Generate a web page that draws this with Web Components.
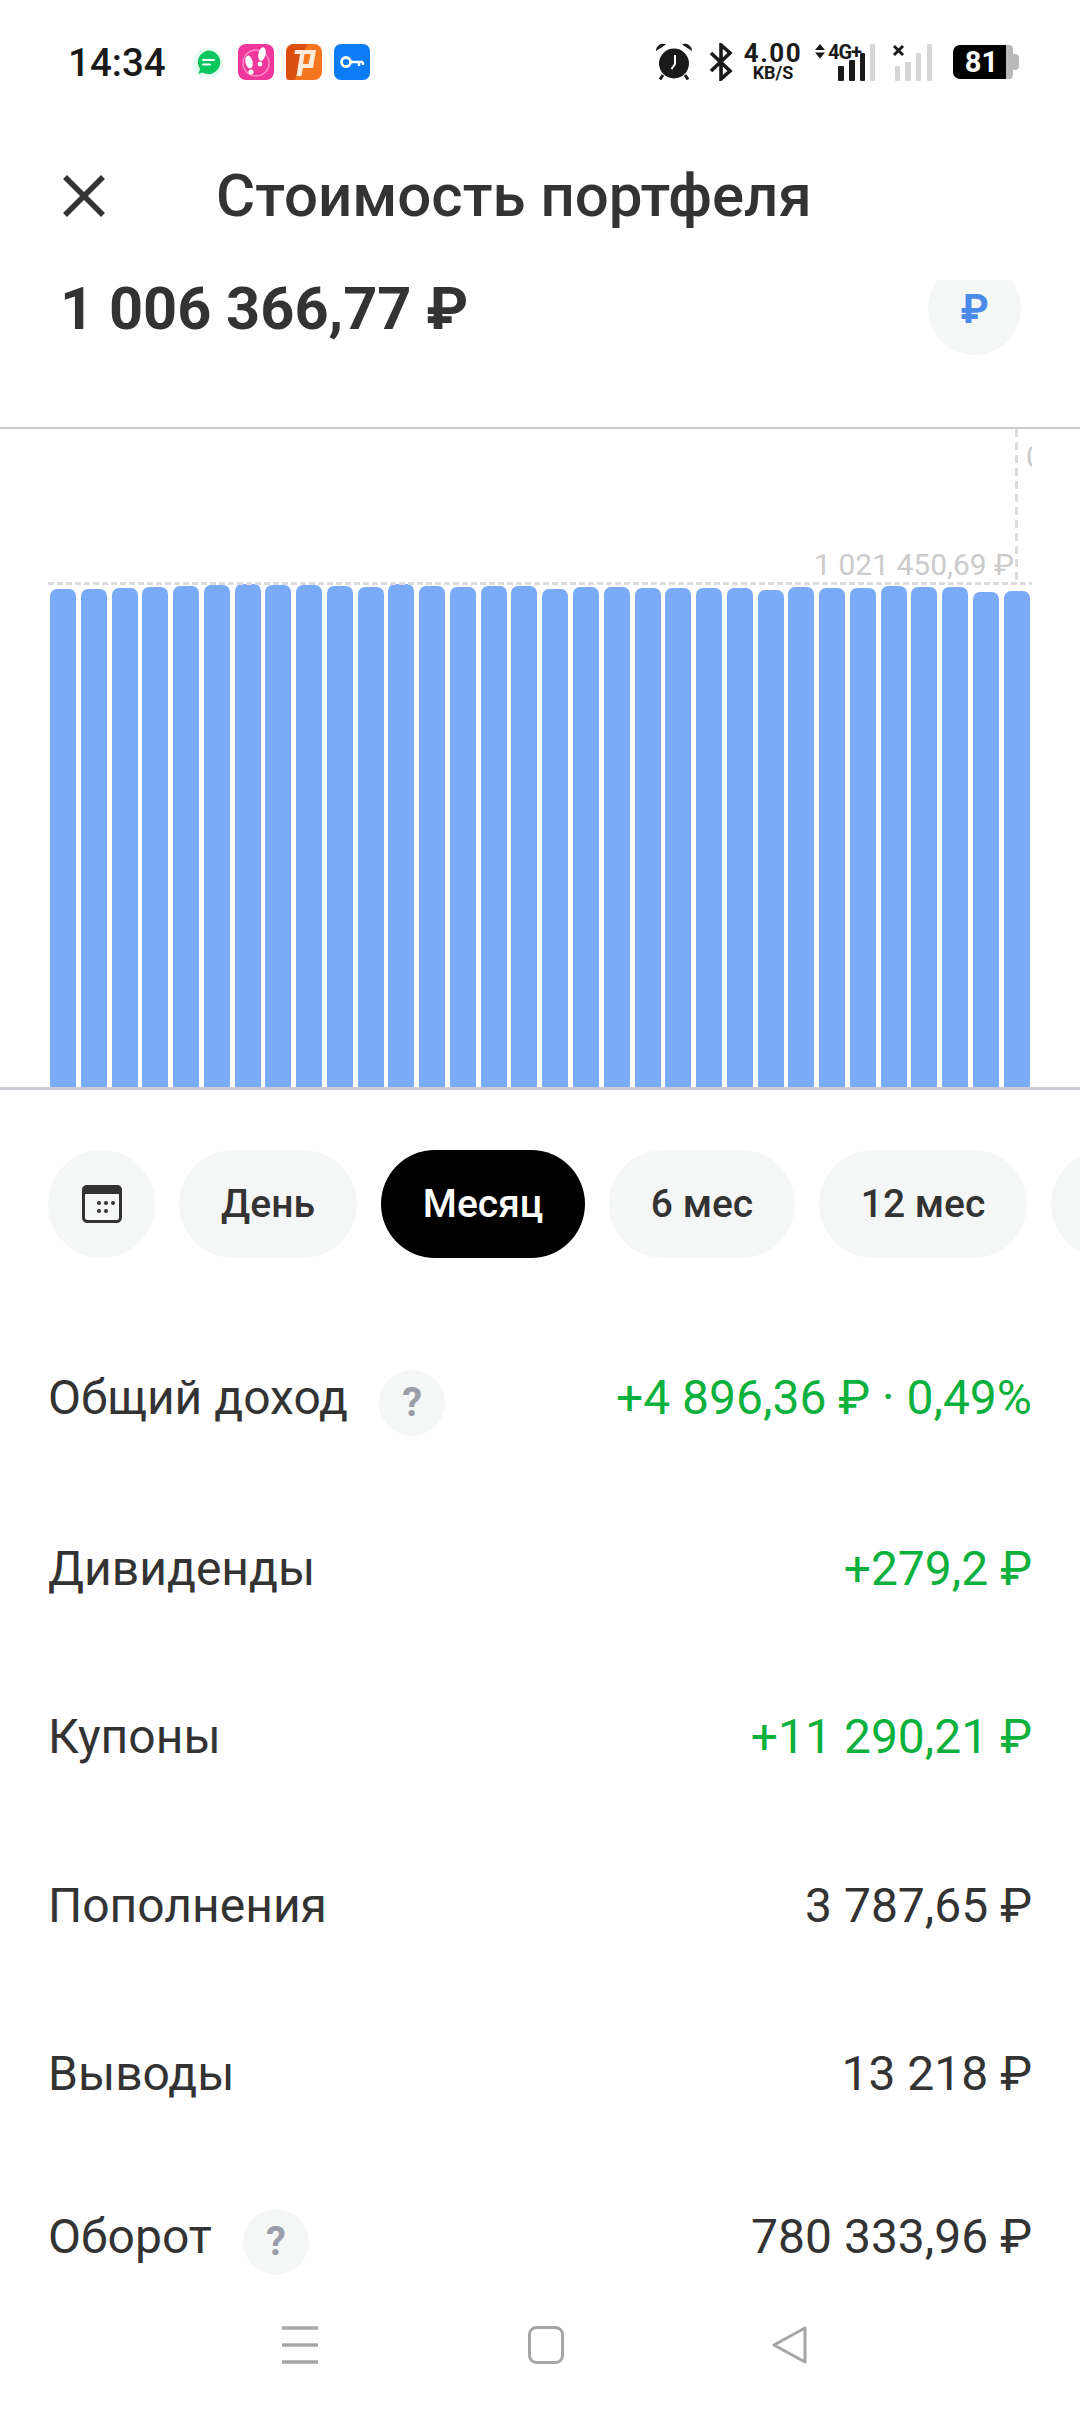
<!DOCTYPE html>
<html lang="ru">
<head>
<meta charset="utf-8">
<title>Стоимость портфеля</title>
<style>
  html, body { margin: 0; padding: 0; background: #fff; }
  body { width: 1080px; height: 2412px; overflow: hidden; font-family: Roboto, "Noto Sans", sans-serif; color: #333; }
</style>
</head>
<body>
<status-bar></status-bar>
<title-bar>Стоимость портфеля</title-bar>
<total-head amount="1 006 366,77 ₽"></total-head>
<bar-chart></bar-chart>
<period-chips></period-chips>
<stat-row label="Общий доход" value="+4 896,36 ₽ · 0,49%" help green style="height:166px;padding-bottom:8px"></stat-row>
<stat-row label="Дивиденды" value="+279,2 ₽" green style="height:170px"></stat-row>
<stat-row label="Купоны" value="+11 290,21 ₽" green style="height:166px"></stat-row>
<stat-row label="Пополнения" value="3 787,65 ₽" style="height:172px"></stat-row>
<stat-row label="Выводы" value="13 218 ₽" style="height:164px"></stat-row>
<stat-row label="Оборот" value="780 333,96 ₽" help style="height:162px"></stat-row>
<nav-bar></nav-bar>

<script>
class StatusBar extends HTMLElement {
    constructor() {
        super();
        this.attachShadow({mode: "open"}).innerHTML = `
            <style>
                :host { display: flex; align-items: center; height: 124px; padding: 0 61px 0 68px; box-sizing: border-box; color: #1a1a1a; }
                .time { font: 500 38.5px Roboto, sans-serif; width: 122px; }
                .apps { display: flex; gap: 12px; }
                .apps svg { width: 36px; height: 36px; display: block; }
                .right { margin-left: auto; display: flex; align-items: center; height: 38px; position: relative; }
                svg { display: block; flex: none; }
                .speed { display: flex; flex-direction: column; align-items: center; width: 60px; margin-left: 10px; }
                .speed b { font: 700 26px/20px Roboto, sans-serif; letter-spacing: 1.5px; }
                .speed i { font: 700 18px/16px Roboto, sans-serif; font-style: normal; margin-top: 2px; }
                .lte { position: relative; width: 60px; height: 38px; margin-left: 12px; }
                .lte span { position: absolute; left: 13px; top: 1px; font: 700 20px/16px Roboto, sans-serif; letter-spacing: -1px; }
                .batt { display: flex; align-items: center; margin-left: 20px; }
                .batt .fill { width: 53px; height: 34px; background: #000; color: #fff; border-radius: 7px 0 0 7px; font: 700 29px/35px Roboto, sans-serif; text-align: center; padding-left: 4px; box-sizing: border-box; }
                .batt .rest { width: 7px; height: 34px; background: #b9b9b9; border-radius: 0 4px 4px 0; }
                .batt .tip { width: 6px; height: 16px; background: #b9b9b9; border-radius: 0 4px 4px 0; }
            </style>
            <span class="time">14:34</span>
            <div class="apps">
                <svg viewBox="0 0 36 36"><circle cx="18" cy="19" r="15" fill="#0fd06a" opacity=".1"/><path d="M18.500 6.500a11.800 11.800 0 1 1-6 22l-4 1.500 1.500-5a11.800 11.800 0 0 1 8.500-18.500z" fill="#0ac75f"/><path d="M13 16h11M13 20.500h7" stroke="#fff" stroke-width="2" stroke-linecap="round"/></svg>
                <svg viewBox="0 0 36 36"><rect width="36" height="36" rx="8" fill="#f0379b"/><circle cx="18" cy="19" r="13" fill="none" stroke="#ff8cc6" stroke-width="1.500"/><ellipse cx="24" cy="10" rx="3.600" ry="7" fill="#fff" transform="rotate(12 24 10)"/><circle cx="22" cy="20" r="2.400" fill="#fff"/><ellipse cx="11" cy="18" rx="3.600" ry="6.500" fill="#fff" transform="rotate(-12 11 18)"/><circle cx="13" cy="28" r="2.600" fill="#fff"/></svg>
                <svg viewBox="0 0 36 36"><rect width="36" height="36" rx="8" fill="#f4761f"/><path d="M0 33V8a8 8 0 0 1 8-8h13L9 36H3a3 3 0 0 1-3-3z" fill="#dd4f10"/><path fill-rule="evenodd" d="M9 6h21l-3 18H17l-1.500 8h-5l3.500-22H8.500zM18.500 10l-1.500 10h5.500L24.500 10z" fill="#fdeadb"/></svg>
                <svg viewBox="0 0 36 36"><rect width="36" height="36" rx="7" fill="#0a7cf5"/><circle cx="12" cy="18" r="4.500" fill="none" stroke="#fff" stroke-width="2.800"/><path d="M16 18h13M25 18v4M29 18v3" stroke="#fff" stroke-width="2.400" fill="none"/></svg>
            </div>
            <div class="right">
                <svg width="38" height="38" viewBox="0 0 38 38"><circle cx="19" cy="20.500" r="15" fill="#1a1a1a"/><path d="M1 8A7 7 0 0 1 11 1.500zM37 8A7 7 0 0 0 27 1.500z" fill="#1a1a1a"/><path d="M8 32l-3 4.500M30 32l3 4.500" stroke="#1a1a1a" stroke-width="3"/><path d="M20 12v9l-3.500 5" stroke="#fff" stroke-width="2" fill="none"/></svg>
                <svg width="24" height="38" viewBox="0 0 24 38" style="margin-left:16px"><path d="M2 10l19 18-9 8V2l9 8L2 28" fill="none" stroke="#1a1a1a" stroke-width="3.600"/></svg>
                <div class="speed"><b>4.00</b><i>KB/S</i></div>
                <div class="lte">
                    <svg width="60" height="38" viewBox="0 0 60 38" style="position:absolute;left:0;top:0"><path d="M0 7l5-6 5 6zM0 9.500l5 6 5-6z" fill="#1a1a1a"/><rect x="23" y="23" width="6" height="15" rx="1" fill="#1a1a1a"/><rect x="34" y="17" width="6" height="21" rx="1" fill="#1a1a1a"/><rect x="45" y="10" width="5" height="28" rx="1" fill="#1a1a1a"/><rect x="55" y="1" width="5" height="37" rx="1" fill="#d6d6d6"/></svg>
                    <span>4G+</span>
                </div>
                <svg width="41" height="38" viewBox="0 0 41 38" style="margin-left:17px"><path d="M2 3l9 9M11 3l-9 9" stroke="#1a1a1a" stroke-width="3"/><rect x="3" y="23" width="5" height="15" rx="1" fill="#d6d6d6"/><rect x="13" y="19" width="6" height="19" rx="1" fill="#d6d6d6"/><rect x="24" y="10" width="5" height="28" rx="1" fill="#d6d6d6"/><rect x="35" y="1" width="5" height="37" rx="1" fill="#d6d6d6"/></svg>
                <div class="batt"><div class="fill">81</div><div class="rest"></div><div class="tip"></div></div>
            </div>`;
    }
}
customElements.define("status-bar", StatusBar);

class TitleBar extends HTMLElement {
    constructor() {
        super();
        this.attachShadow({mode: "open"}).innerHTML = `
            <style>
                :host { display: flex; align-items: center; height: 156px; padding: 0 0 12px 62px; box-sizing: border-box; position: relative; z-index: 1; background: #fff; }
                svg { width: 44px; height: 44px; flex: none; }
                h1 { margin: 0 0 2px 110px; font: 500 60px Roboto, sans-serif; color: #333; }
            </style>
            <svg viewBox="0 0 44 44"><path d="M3 3l38 38M41 3L3 41" stroke="#333" stroke-width="5.500"/></svg>
            <h1><slot></slot></h1>`;
    }
}
customElements.define("title-bar", TitleBar);

class TotalHead extends HTMLElement {
    constructor() {
        super();
        this.attachShadow({mode: "open"}).innerHTML = `
            <style>
                :host { display: flex; height: 147px; padding: 0 59px 0 60px; box-sizing: border-box; justify-content: space-between; }
                .sum { font: 700 59.5px/60px Roboto, sans-serif; color: #333; margin-top: -1px; }
                .cur { width: 93px; height: 93px; margin-top: -18px; border-radius: 50%; background: #f5f7f7; color: #4a8ae8; font: 700 40px/95px Roboto, sans-serif; text-align: center; }
            </style>
            <span class="sum">${this.getAttribute("amount")}</span>
            <span class="cur">₽</span>`;
    }
}
customElements.define("total-head", TotalHead);

class BarChart extends HTMLElement {
    constructor() {
        super();
        const tops = [589,589,588,587,586,585,584,585,585,586,587,584,586,587,586,586,589,587,587,588,588,588,588,590,587,588,588,586,587,587,592,591];
        const bars = tops.map(t => `<i style="height:${1087 - t}px"></i>`).join("");
        this.attachShadow({mode: "open"}).innerHTML = `
            <style>
                :host { display: block; height: 663px; position: relative; border-top: 2px solid #ccc; border-bottom: 3px solid #c9ccd2; box-sizing: border-box; overflow: hidden; }
                .bars { display: flex; gap: 4.77px; align-items: flex-end; height: 100%; padding-left: 50px; box-sizing: border-box; }
                i { display: block; width: 26px; background: #7aabf8; border-radius: 7px 7px 0 0; }
                .hline { position: absolute; left: 48px; top: 153px; width: 984px; height: 3px; background: repeating-linear-gradient(90deg, #dcdcdc 0 6px, transparent 6px 9px); }
                .vline { position: absolute; left: 1015px; top: 0; width: 3px; height: 156px; background: repeating-linear-gradient(180deg, #dcdcdc 0 8px, transparent 8px 13px); }
                .max { position: absolute; right: 66px; top: 118px; font: 400 30px/36px Roboto, sans-serif; color: #cbcbcb; }
                .next { position: absolute; left: 1026px; top: 10px; width: 6px; overflow: hidden; font: 400 30px/36px Roboto, sans-serif; color: #cbcbcb; }
            </style>
            <div class="bars">${bars}</div>
            <div class="hline"></div>
            <div class="vline"></div>
            <span class="max">1 021 450,69 ₽</span>
            <span class="next">0</span>`;
    }
}
customElements.define("bar-chart", BarChart);

class PeriodChips extends HTMLElement {
    constructor() {
        super();
        this.attachShadow({mode: "open"}).innerHTML = `
            <style>
                :host { display: flex; gap: 24px; height: 228px; padding: 60px 0 0 48px; box-sizing: border-box; overflow: hidden; }
                span { flex: none; height: 108px; border-radius: 54px; background: #f5f7f7; font: 500 39px/108px Roboto, sans-serif; color: #333; text-align: center; display: block; }
                .on { background: #000; color: #fff; }
                .cal { display: flex; align-items: center; justify-content: center; }
            </style>
            <span class="cal" style="width:107px">
                <svg width="40" height="38" viewBox="0 0 40 38"><path d="M0 9V5a5 5 0 0 1 5-5h30a5 5 0 0 1 5 5v4z" fill="#333"/><rect x="1.500" y="1.500" width="37" height="35" rx="4" fill="none" stroke="#333" stroke-width="3"/><g fill="#333"><circle cx="17" cy="18" r="2"/><circle cx="24" cy="18" r="2"/><circle cx="31" cy="18" r="2"/><circle cx="17" cy="26" r="2"/><circle cx="24" cy="26" r="2"/></g></svg>
            </span>
            <span style="width:178px">День</span>
            <span class="on" style="width:204px">Месяц</span>
            <span style="width:186px">6 мес</span>
            <span style="width:208px">12 мес</span>
            <span style="width:108px"></span>`;
    }
}
customElements.define("period-chips", PeriodChips);

class StatRow extends HTMLElement {
    constructor() {
        super();
        const help = this.hasAttribute("help") ? `<b>?</b>` : "";
        this.attachShadow({mode: "open"}).innerHTML = `
            <style>
                :host { display: flex; align-items: center; height: 168px; padding: 0 48px 2px; box-sizing: border-box; font: 400 48px Roboto, sans-serif; color: #333; }
                b { width: 66px; height: 66px; margin: 11px 0 0 31px; border-radius: 50%; background: #f5f7f7; color: #9a9ea8; font: 700 40px/66px Roboto, sans-serif; text-align: center; }
                .val { margin-left: auto; }
                :host([green]) .val { color: #0cb13d; }
            </style>
            <span>${this.getAttribute("label")}</span>${help}
            <span class="val">${this.getAttribute("value")}</span>`;
    }
}
customElements.define("stat-row", StatRow);

class NavBar extends HTMLElement {
    constructor() {
        super();
        this.attachShadow({mode: "open"}).innerHTML = `
            <style>
                :host { display: flex; align-items: flex-start; height: 94px; padding: 8px 0 0 282px; box-sizing: border-box; }
                svg { display: block; flex: none; }
            </style>
            <svg width="36" height="38" viewBox="0 0 36 38"><path d="M0 2h36M0 19h36M0 36h36" stroke="#a6a6a6" stroke-width="3.500"/></svg>
            <svg width="36" height="38" viewBox="0 0 36 38" style="margin-left:210px"><rect x="1.500" y="1.500" width="33" height="35" rx="7" fill="none" stroke="#a6a6a6" stroke-width="3"/></svg>
            <svg width="36" height="38" viewBox="0 0 36 38" style="margin-left:208px"><path d="M33 2L2 19l31 17z" fill="none" stroke="#a6a6a6" stroke-width="3" stroke-linejoin="round"/></svg>`;
    }
}
customElements.define("nav-bar", NavBar);
</script>
</body>
</html>
